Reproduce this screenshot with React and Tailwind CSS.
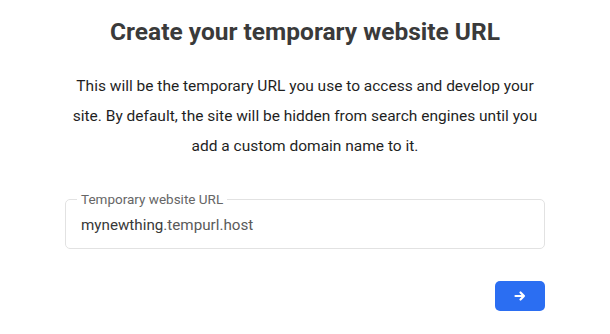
export default function App() {
  return (
    <div className="w-[610px] h-[334px] bg-white" style={{ fontFamily: "Roboto, 'Liberation Sans', sans-serif" }}>
      <div className="mx-auto w-[480px] pt-[14px]">
        <h1 className="text-center text-[24.5px] leading-[36px] font-bold text-[#3a3a3a]">
          Create your temporary website URL
        </h1>
        <p className="mt-[21px] text-center text-[15.5px] leading-[30px] text-[#1f1f1f] px-[4px]">
          This will be the temporary URL you use to access and develop your site. By default, the site will be hidden from search engines until you add a custom domain name to it.
        </p>
        <fieldset className="mt-[31px] border border-[#e2e2e2] rounded-[5px] px-[11px] h-[57px]">
          <legend className="px-[4px] text-[13.5px] leading-[14px] text-[#666]">Temporary website URL</legend>
          <div className="text-[15.2px] leading-[20px] pt-[9px] pl-[4px] font-normal">
            <span className="text-[#383838]">mynewthing</span>
            <span className="text-[#5a5a5a]">.tempurl.host</span>
          </div>
        </fieldset>
        <div className="flex justify-end mt-[32px]">
          <button className="w-[50px] h-[30px] rounded-[5px] bg-[#2b6ef2] flex items-center justify-center">
            <svg width="12" height="12" viewBox="0 0 12 12" fill="none" stroke="white" strokeWidth="2.2" strokeLinecap="round" strokeLinejoin="round">
              <path d="M1.5 6h8.5M6.5 2.5L10 6l-3.5 3.5" />
            </svg>
          </button>
        </div>
      </div>
    </div>
  );
}
